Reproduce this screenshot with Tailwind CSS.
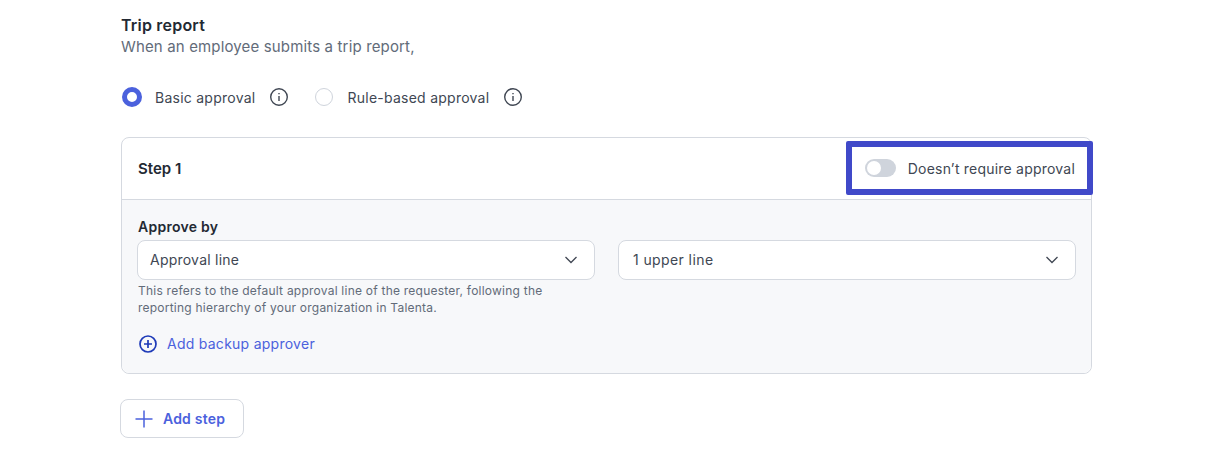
<!DOCTYPE html>
<html lang="en">
<head>
  <meta charset="UTF-8" />
  <title>Trip report</title>
  <script src="https://cdn.jsdelivr.net/npm/@tailwindcss/browser@4"></script>
</head>
<body class="bg-white font-['Inter',sans-serif] text-[#232933]">
  <div class="w-[1217px] h-[453px] overflow-hidden pl-[121px] pt-[15px]">
    <div class="w-[971px]">
      <h2 class="text-[16px] leading-[20px] font-semibold tracking-[0.2px]">Trip report</h2>
      <p class="text-[15px] leading-[20px] mt-[2px] tracking-[0.15px] text-[#626b79]">When an employee submits a trip report,</p>

      <div class="flex items-center mt-[28px] h-[24px] text-[14px] tracking-[0.25px] text-[#404753]">
        <span class="w-[20px] h-[20px] ml-[1px] rounded-full border-[5px] border-[#4b61dd] bg-white"></span>
        <span class="ml-[13px]">Basic approval</span>
        <svg class="ml-[14px]" width="20" height="20" viewBox="0 0 20 20" fill="none" stroke="#404753" stroke-width="1.4">
          <circle cx="10" cy="10" r="8.3" />
          <path d="M10 9v5M10 6v1.3" />
        </svg>
        <span class="w-[18px] h-[18px] ml-[26px] rounded-full border-[1.5px] border-[#cfd4dc] bg-white"></span>
        <span class="ml-[14px]">Rule-based approval</span>
        <svg class="ml-[14px]" width="20" height="20" viewBox="0 0 20 20" fill="none" stroke="#404753" stroke-width="1.4">
          <circle cx="10" cy="10" r="8.3" />
          <path d="M10 9v5M10 6v1.3" />
        </svg>
      </div>

      <div class="mt-[28px] border border-[#d5d9e0] rounded-[8px]">
        <div class="relative flex items-center justify-between h-[62px] pl-[16px] pr-[16px] border-b border-[#d5d9e0]">
          <span class="text-[15px] font-semibold pt-[1px]">Step 1</span>
          <div class="flex items-center -mt-[1px]">
            <span class="flex items-center w-[31px] h-[18px] rounded-full bg-[#cfd4dc] pl-[2px]">
              <span class="w-[14px] h-[14px] rounded-full bg-white"></span>
            </span>
            <span class="ml-[12px] text-[14px] tracking-[0.21px] text-[#404753]">Doesn’t require approval</span>
          </div>
          <div class="absolute right-[-2px] top-[3px] w-[247px] h-[54px] border-[6px] border-[#4049c9] rounded-[2px]"></div>
        </div>
        <div class="bg-[#f7f8fa] rounded-b-[8px] h-[173px] pl-[15px] pr-[15px] pt-[17px]">
          <div class="text-[14px] leading-[20px] font-semibold tracking-[0.25px] pl-[1px]">Approve by</div>
          <div class="flex gap-[23px] mt-[3px]">
            <div class="w-[459px]">
              <div class="flex items-center justify-between h-[40px] bg-white border border-[#d5d9e0] rounded-[8px] pl-[12px] pr-[15px] pb-[1px] text-[14px] tracking-[0.23px] text-[#404753]">
                <span>Approval line</span>
                <svg width="16" height="16" viewBox="0 0 16 16" fill="none" stroke="#404753" stroke-width="1.3"><path d="M2.5 5l5.5 5.5L13.500 5" /></svg>
              </div>
              <p class="mt-[2px] pl-[1px] text-[12px] leading-[17px] tracking-[0.23px] text-[#626b79]">This refers to the default approval line of the requester, following the<br />reporting hierarchy of your organization in Talenta.</p>
            </div>
            <div class="w-[459px]">
              <div class="flex items-center justify-between h-[40px] bg-white border border-[#d5d9e0] rounded-[8px] pl-[14px] pr-[15px] pb-[1px] text-[14px] tracking-[0.4px] text-[#404753]">
                <span>1 upper line</span>
                <svg width="16" height="16" viewBox="0 0 16 16" fill="none" stroke="#404753" stroke-width="1.3"><path d="M2.5 5l5.5 5.5L13.500 5" /></svg>
              </div>
            </div>
          </div>
          <div class="flex items-center mt-[17px] pl-[1px] text-[14px] tracking-[0.26px] text-[#4b61dd]">
            <svg width="20" height="20" viewBox="0 0 20 20" fill="none" stroke="#1e3ab8" stroke-width="1.7">
              <circle cx="10" cy="10" r="8" />
              <path d="M10 6v8M6 10h8" />
            </svg>
            <span class="ml-[9px]">Add backup approver</span>
          </div>
        </div>
      </div>

      <button type="button" class="flex items-center mt-[25px] -ml-[1px] w-[124px] h-[39px] border border-[#d5d9e0] rounded-[8px] bg-white pl-[14px] text-[14px] font-semibold tracking-[0.2px] text-[#4b61dd]">
        <svg width="18" height="18" viewBox="0 0 18 18" fill="none" stroke="#4b61dd" stroke-width="1.5"><path d="M9 .5v17M.5 9h17" /></svg>
        <span class="ml-[10px]">Add step</span>
      </button>
    </div>
  </div>
</body>
</html>
